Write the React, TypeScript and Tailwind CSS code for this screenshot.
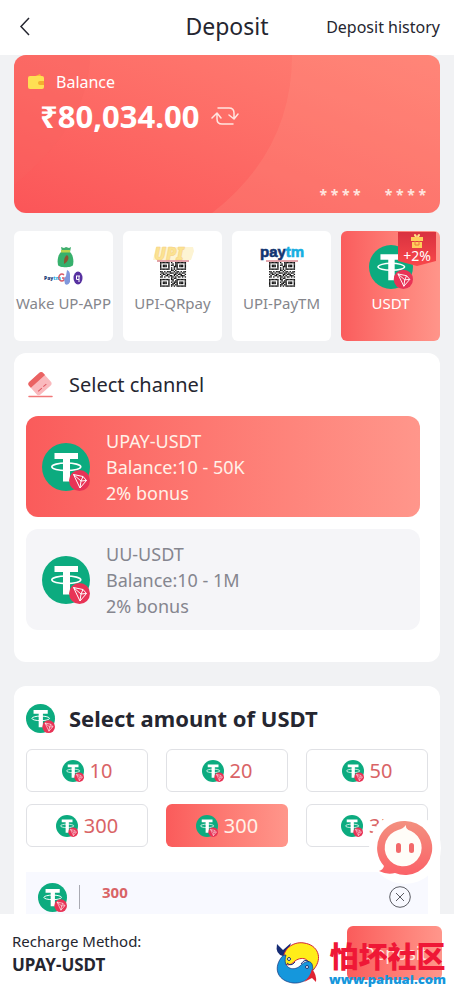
import React, { useState } from "react";
import { clsx } from "clsx";

const METHODS = [
    { id: "wake", label: "Wake UP-APP", icon: WakeIcon },
    { id: "qrpay", label: "UPI-QRpay", icon: UpiQrIcon },
    { id: "paytm", label: "UPI-PayTM", icon: PaytmIcon },
    { id: "usdt", label: "USDT", icon: UsdtLarge, bonus: "+2%" },
];

const CHANNELS = [
    { name: "UPAY-USDT", range: "10 - 50K", bonus: "2% bonus" },
    { name: "UU-USDT", range: "10 - 1M", bonus: "2% bonus" },
];

const AMOUNTS = ["10", "20", "50", "300", "300", "3K"];

const QR_ROWS = [
    "1111111010011111111",
    "1000001001011000001",
    "1011101011011011101",
    "1011101000111011101",
    "1000001010101000001",
    "1111111010101111111",
    "0000000011010000000",
    "1101011100101101011",
    "0110100111011010110",
    "1011011000110111001",
    "0100110110101001110",
    "1101001011010110101",
    "0000000010110000000",
    "1111111011001111111",
    "1000001001011000001",
    "1011101010111011101",
    "1011101001101011101",
    "1000001011011000001",
    "1111111010101111111",
];

function Usdt({ className }: { className?: string }) {
    return (
        <svg viewBox="0 0 48 48" className={clsx("shrink-0", className)} aria-hidden="true">
            <circle cx="24" cy="24" r="24" fill="#0cab7f" />
            <path d="M12.500 10h23.500v6H28v22.500h-7V16h-8.500z" fill="#fff" />
            <ellipse cx="24.300" cy="23.800" rx="14.500" ry="3.800" fill="none" stroke="#fff" strokeWidth="1.600" />
            <circle cx="37.500" cy="37.500" r="10.500" fill="#e83356" />
            <path d="M31.500 31.500l9.500 2 3.500 4-6.500 7.500zM31.500 31.500l7.500 6.500 5.500-.5M39 38l2-4.500M39 38l-1 7" fill="none" stroke="#fff" strokeWidth="1" strokeLinejoin="round" />
        </svg>
    );
}

function UsdtLarge() {
    return <Usdt className="size-11" />;
}

function QrCode() {
    return (
        <g>
            {QR_ROWS.map((row, y) =>
                row.split("").map((cell, x) =>
                    cell === "1" ? <rect key={`${x}-${y}`} x={9 + x * 1.37} y={17 + y * 1.3} width="1.400" height="1.350" fill="#111" /> : null
                )
            )}
        </g>
    );
}

function WakeIcon() {
    return (
        <svg viewBox="0 0 44 44" className="size-11 overflow-visible" aria-hidden="true">
            <path d="M19 2l3 1 2-1 3 1 2-1-1 5h-8z" fill="#3fae6c" />
            <path d="M19 7h9c3 3 4 8 3 13-1 3-14 3-15 0-1-5 0-10 3-13z" fill="#37b06c" />
            <path d="M19 5h9v2.500h-9z" fill="#b8d44d" />
            <path d="M25 10c3 2 1 7-3 9 0-4 0-7 3-9z" fill="#8d5332" />
            <text x="2" y="35" fontFamily="Noto Sans" fontSize="5" fontWeight="900" fill="#173a75">Pay<tspan fill="#27aee5">tm</tspan></text>
            <path d="M22 30a3 3.500 0 10 0 5v-2h-2" fill="none" stroke="#d65b68" strokeWidth="1.300" />
            <path d="M25 25q3 1 3 5v7q-2 4-5 2l-1-5 2-3z" fill="#7f97dc" />
            <ellipse cx="36" cy="33" rx="4.500" ry="6.500" fill="#5731a0" />
            <path d="M34 31h4M37 31v6M34.500 31v3.500H37" stroke="#fff" fill="none" />
        </svg>
    );
}

function UpiQrIcon() {
    return (
        <svg viewBox="0 0 44 44" className="size-11 overflow-visible" aria-hidden="true">
            <path d="M5 2h37l1 4-3 9H2z" fill="#fdf4d3" />
            <text x="3" y="15" fontFamily="Noto Sans" fontSize="17" fontWeight="900" fontStyle="italic" fill="#fbe391" stroke="#f7cf83" strokeWidth=".5">UPI</text>
            <path d="M6 16h32" stroke="#c74c5a" />
            <QrCode />
        </svg>
    );
}

function PaytmIcon() {
    return (
        <svg viewBox="0 0 44 44" className="size-11 overflow-visible" aria-hidden="true">
            <text x="0" y="12" fontFamily="Liberation Sans" fontSize="15" fontWeight="900" fill="#123571" stroke="#123571" strokeWidth=".6">pay<tspan fill="#17aee1" stroke="#17aee1">tm</tspan></text>
            <path d="M6 16h32" stroke="#c74c5a" />
            <QrCode />
        </svg>
    );
}

function WalletIcon() {
    return (
        <svg viewBox="0 0 16 16" className="size-4" aria-hidden="true">
            <path d="M3 4l9-4 2 4z" fill="#f9bc38" />
            <rect y="2" width="16" height="13" rx="2" fill="#ffdf53" />
            <path d="M16 7h-4a2 2 0 000 4h4z" fill="#f5ad2f" />
        </svg>
    );
}

function RefreshIcon() {
    return (
        <svg viewBox="0 0 28 20" className="h-5 w-7" fill="none" stroke="#ffe5df" strokeWidth="1.500" strokeLinecap="round" strokeLinejoin="round" aria-hidden="true">
            <path d="M7 2h11q5 0 5 5v6M18 9l5 4 4-5M22 18H11q-5 0-5-5V7M1 12l5-5 4 5" />
        </svg>
    );
}

function CardIcon() {
    return (
        <svg viewBox="0 0 28 28" className="size-7" aria-hidden="true">
            <g transform="rotate(-42 14 12)">
                <rect x="4" y="4" width="19" height="17" rx="3" fill="#fab9bd" />
                <path d="M7 4h13a3 3 0 013 3v2.500H4V7a3 3 0 013-3z" fill="#ea6262" />
                <path d="M7 17h5M14 17h4" stroke="#de5963" />
            </g>
            <path d="M3 25.500h23" stroke="#f17879" strokeWidth="1.500" strokeLinecap="round" />
        </svg>
    );
}

function BonusTag({ label }: { label: string }) {
    return (
        <span className="absolute top-px right-1 flex h-[34px] w-[38px] flex-col items-center bg-linear-to-b from-[#d9323f] to-[#f9474b] pt-0.5 text-sm leading-4 text-white [clip-path:polygon(0_0,100%_0,100%_85%,50%_100%,0_85%)]">
            <svg viewBox="0 0 14 14" className="size-3.5 shrink-0" aria-hidden="true">
                <path d="M7 4C4 3 3 0 5 0s2 4 2 4 0-4 2-4 1 3-2 4z" fill="#ffe288" />
                <path d="M1 3h12v4H1zM2 8h10v6H2z" fill="#ffcf5b" />
                <path d="M5 7v4h4V7" fill="none" stroke="#ed7940" />
            </svg>
            {label}
        </span>
    );
}

function ChatIcon() {
    return (
        <svg viewBox="0 0 72 72" className="size-[72px]" aria-hidden="true">
            <defs>
                <linearGradient id="chat" x1="0" y1="0" x2="0" y2="1">
                    <stop stopColor="#f3907f" />
                    <stop offset="1" stopColor="#fb6268" />
                </linearGradient>
            </defs>
            <circle cx="36" cy="36" r="36" fill="#fff" />
            <path d="M36 9a27 27 0 11-10 52q-8 2-16-2 4-1 5-5A27 27 0 0136 9z" fill="url(#chat)" />
            <path d="M37 13q-1 4 5 6a18.500 18.500 0 11-13-1q5-1 8-5z" fill="#fffdf8" />
            <rect x="27" y="31" width="5" height="10" rx="2.500" fill="#f2696a" />
            <rect x="40" y="31" width="5" height="10" rx="2.500" fill="#f2696a" />
        </svg>
    );
}

function FishLogo() {
    return (
        <svg viewBox="0 0 50 46" className="h-[46px] w-[50px] shrink-0" aria-hidden="true">
            <path d="M10 16Q2 14 4 4l6 6 8-7-4 12z" fill="#162c75" />
            <path d="M11 22C8 10 20 1 31 3c14 2 19 15 10 26-1 2-3 3-5 3 4-12-6-17-14-11-5 5-9 5-11 1z" fill="#ffed19" stroke="#d22439" />
            <path d="M39 24C43 36 31 44 20 43 5 41 0 29 8 18c1-2 3-3 5-3-4 13 7 17 14 11 5-5 10-6 12-2z" fill="#1597dc" stroke="#17347b" strokeWidth=".7" />
            <path d="M39 29q5 6 4 13l-4-4-8 4q6-5 8-13z" fill="#df2332" />
            <path d="M14 23q4 4 8-1M36 22q-4-4-8 2" fill="none" stroke="#17347b" />
            <circle cx="16" cy="19" r="1.500" fill="#fff" stroke="#173374" />
            <circle cx="34" cy="27" r="1.500" fill="#fff" stroke="#173374" />
        </svg>
    );
}

export default function App() {
    const [method, setMethod] = useState("usdt");
    const [channel, setChannel] = useState(0);
    const [selected, setSelected] = useState(4);
    const [amount, setAmount] = useState("300");

    return (
        <div className="flex h-dvh flex-col overflow-hidden bg-[#f1f2f4] font-['Noto_Sans','Noto_Sans_CJK_SC',sans-serif] text-[#252630]">
            <header className="grid h-[55px] shrink-0 grid-cols-[1fr_auto_1fr] items-center bg-white px-3.5 pb-0.5">
                <button aria-label="Back" className="size-6">
                    <svg viewBox="0 0 24 24" className="size-6" fill="none" stroke="currentColor" strokeWidth="1.500" aria-hidden="true">
                        <path d="M15 3l-8 8.500 8 8.500" />
                    </svg>
                </button>
                <h1 className="text-[23px]">Deposit</h1>
                <a href="#history" className="justify-self-end text-base whitespace-nowrap">Deposit history</a>
            </header>

            <main className="min-h-0 flex-1 overflow-y-auto px-3.5 [scrollbar-width:none]">
                <section className="relative flex h-[158px] flex-col overflow-hidden rounded-xl bg-linear-to-tr from-[#fb5558] to-[#ff8074] px-3.5 pt-[15px] pb-2.5 text-white">
                    <svg viewBox="0 0 426 158" preserveAspectRatio="none" className="absolute inset-0 size-full" aria-hidden="true">
                        <path d="M278 0q0 96-80 158h228V0z" fill="#ff9a87" opacity=".22" />
                        <path d="M76 0q0 68-76 130V0z" fill="#f8625f" opacity=".3" />
                    </svg>
                    <div className="relative flex items-center gap-3 text-base leading-6"><WalletIcon />Balance</div>
                    <div className="relative flex items-center gap-3 pt-1 pl-3 text-[31px] leading-9 font-bold">
                        ₹80,034.00
                        <button aria-label="Refresh balance" className="flex"><RefreshIcon /></button>
                    </div>
                    <div className="relative mt-auto flex justify-end gap-6 text-sm leading-4 font-bold text-[#ffe5df]">
                        <span>* * * *</span><span>* * * *</span>
                    </div>
                </section>

                <section className="mt-[18px] grid grid-cols-4 gap-2.5">
                    {METHODS.map(({ id, label, icon: Icon, bonus }) => (
                        <button
                            key={id}
                            onClick={() => setMethod(id)}
                            className={clsx(
                                "relative flex h-[110px] flex-col items-center rounded-md pt-3.5 text-[15px] leading-7 whitespace-nowrap",
                                method === id ? "bg-linear-to-r from-[#fa5c5d] to-[#ff958a] text-white" : "bg-white text-[#85868c]"
                            )}
                        >
                            <Icon />
                            {label}
                            {bonus && <BonusTag label={bonus} />}
                        </button>
                    ))}
                </section>

                <section className="mt-3 rounded-xl bg-white px-3 pt-4 pb-8">
                    <h2 className="flex h-8 items-center gap-[15px] text-xl"><CardIcon />Select channel</h2>
                    <div className="mt-[15px] mr-2 flex flex-col gap-3">
                        {CHANNELS.map((item, i) => (
                            <button
                                key={item.name}
                                onClick={() => setChannel(i)}
                                className={clsx(
                                    "flex h-[101px] items-center gap-4 rounded-xl px-4 text-left text-lg leading-[26px]",
                                    channel === i ? "bg-linear-to-r from-[#fa5b5b] to-[#ff968b] text-[#fff1e8]" : "bg-[#f5f5f8] text-[#85868f]"
                                )}
                            >
                                <Usdt className="size-12" />
                                <span>
                                    <span className="block">{item.name}</span>
                                    <span className="block">Balance:{item.range}</span>
                                    <span className="block">{item.bonus}</span>
                                </span>
                            </button>
                        ))}
                    </div>
                </section>

                <section className="mt-6 rounded-xl bg-white px-3 pt-4 pb-6">
                    <h2 className="flex h-8 items-center gap-3.5 text-[22px] font-bold"><Usdt className="size-[29px]" />Select amount of USDT</h2>
                    <div className="mt-[15px] grid grid-cols-3 gap-x-[18px] gap-y-3">
                        {AMOUNTS.map((value, i) => (
                            <button
                                key={i}
                                onClick={() => { setSelected(i); setAmount(value); }}
                                className={clsx(
                                    "flex h-[43px] items-center justify-center gap-1.5 rounded-md text-xl",
                                    selected === i ? "bg-linear-to-r from-[#fa5b5b] to-[#ff968b] text-[#fff1e8]" : "border border-[#e0e1e5] text-[#d96366]"
                                )}
                            >
                                <Usdt className="size-[22px]" />{value}
                            </button>
                        ))}
                    </div>
                    <div className="mt-[25px] flex h-[50px] items-center bg-[#f8f9ff] pr-[17px] pl-3">
                        <Usdt className="size-[29px]" />
                        <span className="mx-3 h-6 w-px bg-[#a9aab2]" />
                        <input aria-label="Amount" value={amount} onChange={(e) => setAmount(e.target.value)} className="min-w-0 flex-1 px-2.5 pb-2.5 text-[15px] font-bold text-[#d96366] outline-none" />
                        <button aria-label="Clear amount" onClick={() => setAmount("")}>
                            <svg viewBox="0 0 22 22" className="size-[22px]" fill="none" stroke="#5b5c63" aria-hidden="true">
                                <circle cx="11" cy="11" r="10.300" /><path d="M7 7l8 8M15 7l-8 8" />
                            </svg>
                        </button>
                    </div>
                </section>
            </main>

            <button aria-label="Customer service" className="fixed right-[13px] bottom-[107px]"><ChatIcon /></button>

            <footer className="relative flex h-[77px] shrink-0 items-center justify-between bg-white px-3">
                <div className="leading-6">
                    <div className="text-[15px]">Recharge Method:</div>
                    <strong className="text-[17px]">{CHANNELS[channel].name}</strong>
                </div>
                <button className="h-[54px] w-[95px] rounded-md bg-linear-to-r from-[#fa5b5b] to-[#ff968b] text-lg text-[#ffe5df]">Deposit</button>
                <div className="pointer-events-none absolute right-2 bottom-1 flex items-center gap-1.5">
                    <FishLogo />
                    <div className="text-center">
                        <div className="font-['Noto_Sans_CJK_SC',sans-serif] text-[29px] leading-8 font-black text-[#ef1736]">怕坏社区</div>
                        <div className="font-['Noto_Sans',sans-serif] text-[13px] leading-4 font-black text-[#1597dc]">www.pahuai.com</div>
                    </div>
                </div>
            </footer>
        </div>
    );
}
